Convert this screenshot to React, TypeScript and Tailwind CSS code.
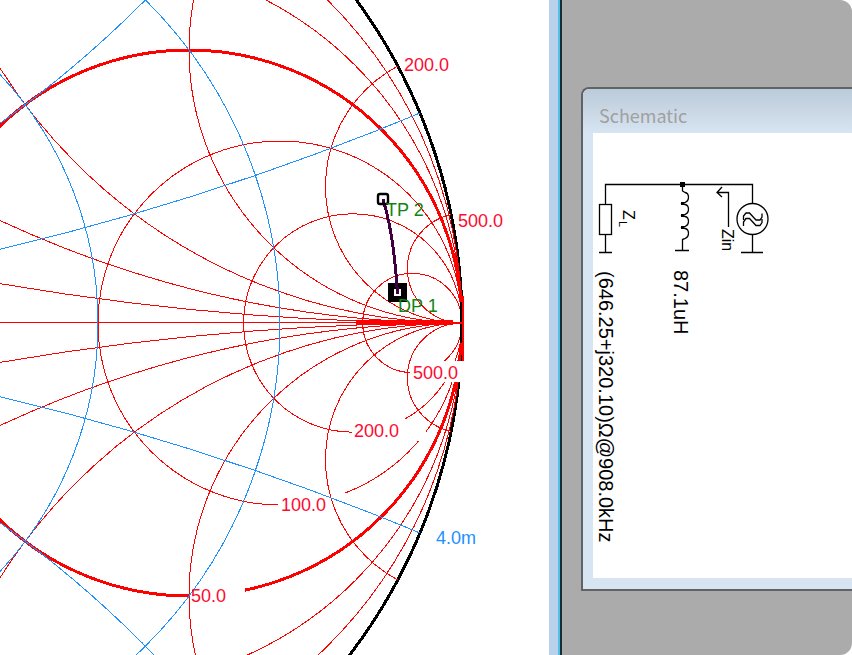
const R = 546;
const CY = 323;
const OPEN_X = 462;
const SHORT_X = OPEN_X - 2 * R;

const RESISTANCE = [0.2, 0.5, 2, 4, 10];
const REACTANCE = [0.2, 0.5, 1, 2, 4, 10];
const CONDUCTANCE = [0.2, 0.5];
const SUSCEPTANCE = [0.2, 0.5];

const LABELS = [
  { text: "500.0", x: 413, y: 379, mask: [410, 361, 54, 21] },
  { text: "200.0", x: 354, y: 437, mask: [352, 419, 74, 22] },
  { text: "100.0", x: 281, y: 511, mask: [278, 493, 71, 22] },
  { text: "50.0", x: 191, y: 602, mask: [190, 585, 55, 22] },
];

function SmithChart() {
  return (
    <svg
      viewBox="0 0 549 655"
      preserveAspectRatio="xMinYMin slice"
      className="block h-full w-full font-['Liberation_Sans',Arial,sans-serif] text-[18px]"
      role="img"
      aria-label="Smith chart"
    >
      <defs>
        <clipPath id="unit">
          <circle cx={OPEN_X - R} cy={CY} r={R} />
        </clipPath>
      </defs>
      <g fill="none" shapeRendering="crispEdges">
        <circle cx={OPEN_X - R} cy={CY} r={R} stroke="#000" strokeWidth="3" />
        <g stroke="#f00">
          {RESISTANCE.map((r) => (
            <circle key={r} cx={OPEN_X - R / (1 + r)} cy={CY} r={R / (1 + r)} />
          ))}
          <circle cx={OPEN_X - R / 2} cy={CY} r={R / 2} strokeWidth="3" />
        </g>
        <path d="M463 296V361" stroke="#f00" strokeWidth="2" />
        <path d="M461 302V343" stroke="#000" strokeWidth="2" />
        {LABELS.map(({ text, mask }) => (
          <rect key={text} x={mask[0]} y={mask[1]} width={mask[2]} height={mask[3]} fill="#fff" />
        ))}
        <g stroke="#f00" clipPath="url(#unit)">
          {REACTANCE.map((x) => (
            <g key={x}>
              <circle cx={OPEN_X} cy={CY - R / x} r={R / x} />
              <circle cx={OPEN_X} cy={CY + R / x} r={R / x} />
            </g>
          ))}
          <path d="M0 322.500H462" />
          <path d="M356 322.500H453" strokeWidth="5" />
        </g>
        <g stroke="#1e90ff">
          {CONDUCTANCE.map((g) => (
            <circle key={g} cx={SHORT_X + R / (1 + g)} cy={CY} r={R / (1 + g)} />
          ))}
          <g clipPath="url(#unit)">
            {SUSCEPTANCE.map((b) => (
              <g key={b}>
                <circle cx={SHORT_X} cy={CY - R / b} r={R / b} />
                <circle cx={SHORT_X} cy={CY + R / b} r={R / b} />
              </g>
            ))}
          </g>
        </g>
        <rect x="391" y="286" width="13" height="13" stroke="#000" strokeWidth="6" />
        <path d="M383 199Q394 235 397.500 294" stroke="#400040" strokeWidth="3" />
      </g>
      <rect x="378" y="194" width="10" height="10" rx="2" fill="none" stroke="#000" strokeWidth="2.400" />
      <g fill="#ff0a32">
        <text x="404" y="71">200.0</text>
        <text x="458" y="227">500.0</text>
        {LABELS.map(({ text, x, y }) => (
          <text key={text} x={x} y={y}>{text}</text>
        ))}
      </g>
      <g fill="#118511">
        <text x="386" y="216">TP 2</text>
        <text x="398" y="312">DP 1</text>
      </g>
      <text x="436" y="544" fill="#1e90ff">4.0m</text>
    </svg>
  );
}

function Circuit() {
  return (
    <svg
      viewBox="593 133 259 445"
      preserveAspectRatio="xMinYMin meet"
      className="block h-[445px] w-[259px] font-['Liberation_Sans',Arial,sans-serif]"
      role="img"
      aria-label="Matching network"
    >
      <g fill="none" stroke="#000" strokeWidth="1.300">
        <path d="M605.500 204V184.500H752.500V204M605.500 234V252M599 252.500H612" />
        <rect x="599.500" y="204.500" width="12" height="30" />
        <path d="M682.500 184V191L685 192.500Q688.500 193 688.500 197.500T682.500 203.500L685 204.500Q688.500 205 688.500 209.500T682.500 215.500L685 216.500Q688.500 217 688.500 221.500T682.500 227.500L685 228.500Q688.500 229 688.500 233.500T682.500 239.500V250.500M675 250.500H689" />
        <path d="M728.500 227V192.500H717M722 187L717 192.500L722 197" />
        <circle cx="752.500" cy="219" r="15.500" />
        <path d="M752.500 234V252M741 252.500H763" />
        <path d="M743.500 220V216L746 213H749.500L756 220H760L762 217V213.500M743.500 226V222L746 218.500H749.500L756 225.500H760L762 222.500V219" />
      </g>
      <rect x="680" y="182" width="5" height="5" />
      <rect x="681" y="202" width="3" height="3" />
      <rect x="681" y="214" width="3" height="3" />
      <rect x="681" y="226" width="3" height="3" />
      <g fontSize="20">
        <text transform="translate(599 271) rotate(90)">(646.25+j320.10)Ω@908.0kHz</text>
        <text transform="translate(674 270) rotate(90)">87.1uH</text>
      </g>
      <text transform="translate(722 229) rotate(90)" fontSize="16">Zin</text>
      <text transform="translate(623 210) rotate(90)" fontSize="16">Z</text>
      <text transform="translate(619 221) rotate(90)" fontSize="11">L</text>
    </svg>
  );
}

export default function App() {
  return (
    <main className="flex h-screen min-h-[655px] overflow-hidden rounded-r-xl bg-[#ababab]">
      <section className="min-w-0 shrink-0 grow basis-[549px] overflow-hidden bg-white">
        <SmithChart />
      </section>
      <div className="w-[13px] shrink-0 border-r-2 border-[#1c2c34] bg-[#b9d1ea]">
        <div className="ml-auto h-full w-[2px] bg-[#4fc0e8]" />
      </div>
      <aside className="min-w-0 grow basis-[290px] overflow-hidden pt-[87px] pl-[19px]">
        <section className="rounded-tl-lg border-t-2 border-b-2 border-l-2 border-[#606366] bg-[#d7e4f2] pb-[11px] pl-[10px]">
          <h2 className="-ml-[10px] flex h-11 items-center rounded-tl-md bg-linear-to-b from-[#bccbd9] to-[#d7e4f2] pt-2 pl-4 font-['Noto_Sans_CJK_SC','Open_Sans',sans-serif] text-[18px] leading-6 text-[#a0a0a0]">
            Schematic
          </h2>
          <div className="overflow-hidden bg-white">
            <Circuit />
          </div>
        </section>
      </aside>
    </main>
  );
}
